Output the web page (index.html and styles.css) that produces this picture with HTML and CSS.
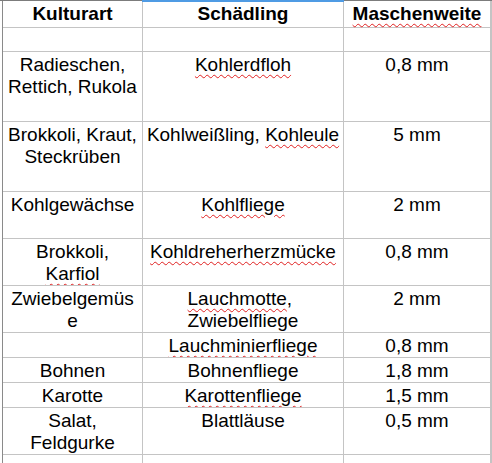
FILE: index.html
```html
<!DOCTYPE html>
<html lang="de">
<head>
<meta charset="utf-8">
<title>Kulturschutznetze</title>
<link rel="stylesheet" href="styles.css">
</head>
<body>
<div class="sheet">
  <div class="grid">
    <div class="cell head">Kulturart</div>
    <div class="cell head selected">Schädling</div>
    <div class="cell head"><span class="sp">Maschenweite</span></div>

    <div class="cell"></div>
    <div class="cell"></div>
    <div class="cell"></div>

    <div class="cell">Radieschen,<br>Rettich, Rukola</div>
    <div class="cell"><span class="sp">Kohlerdfloh</span></div>
    <div class="cell">0,8 mm</div>

    <div class="cell">Brokkoli, Kraut,<br>Steckrüben</div>
    <div class="cell">Kohlweißling, <span class="sp">Kohleule</span></div>
    <div class="cell">5 mm</div>

    <div class="cell">Kohlgewächse</div>
    <div class="cell"><span class="sp">Kohlfliege</span></div>
    <div class="cell">2 mm</div>

    <div class="cell">Brokkoli,<br><span class="sp">Karfiol</span></div>
    <div class="cell"><span class="sp">Kohldreherherzmücke</span></div>
    <div class="cell">0,8 mm</div>

    <div class="cell">Zwiebelgemüs<br>e</div>
    <div class="cell"><span class="block"><span class="sp">Lauchmotte</span>,<br>Zwiebelfliege</span></div>
    <div class="cell">2 mm</div>

    <div class="cell"></div>
    <div class="cell"><span class="sp">Lauchminierfliege</span></div>
    <div class="cell">0,8 mm</div>

    <div class="cell">Bohnen</div>
    <div class="cell">Bohnenfliege</div>
    <div class="cell">1,8 mm</div>

    <div class="cell">Karotte</div>
    <div class="cell"><span class="sp">Karottenfliege</span></div>
    <div class="cell">1,5 mm</div>

    <div class="cell">Salat,<br>Feldgurke</div>
    <div class="cell">Blattläuse</div>
    <div class="cell">0,5 mm</div>

    <div class="cell"></div>
    <div class="cell"></div>
    <div class="cell"></div>
  </div>
</div>
</body>
</html>
```

FILE: styles.css
```css
html, body {
  margin: 0;
  padding: 0;
  background: #ffffff;
}

body {
  width: 492px;
  height: 463px;
  overflow: hidden;
  font-family: "Liberation Sans", Arial, sans-serif;
  font-size: 19px;
  line-height: 22px;
  color: #000000;
}

.sheet {
  border-top: 1px solid #7c7c7c;
}

.grid {
  margin-left: 2px;
  width: 488px;
  border-left: 1px solid #8a8a8a;
  padding-right: 1px;
  display: grid;
  grid-template-columns: 139px 200px 146px;
  grid-template-rows: 26px 23px 69px 69px 46px 46px 46px 24px 24px 24px 46px 30px;
  gap: 1px;
  background: #c4c4c4;
}

.cell {
  background: #ffffff;
  text-align: center;
  padding-top: 2px;
  white-space: nowrap;
  overflow: hidden;
  position: relative;
}

.head {
  font-weight: bold;
  overflow: visible;
}

.selected::before {
  content: "";
  position: absolute;
  left: -1px;
  right: -1px;
  top: -1px;
  height: 2px;
  background: #4f9be4;
}

.block {
  display: inline-block;
  text-align: left;
}

.sp {
  text-decoration-line: underline;
  text-decoration-style: wavy;
  text-decoration-color: #e02020;
  text-decoration-thickness: 1px;
  text-underline-offset: 3px;
}
```
